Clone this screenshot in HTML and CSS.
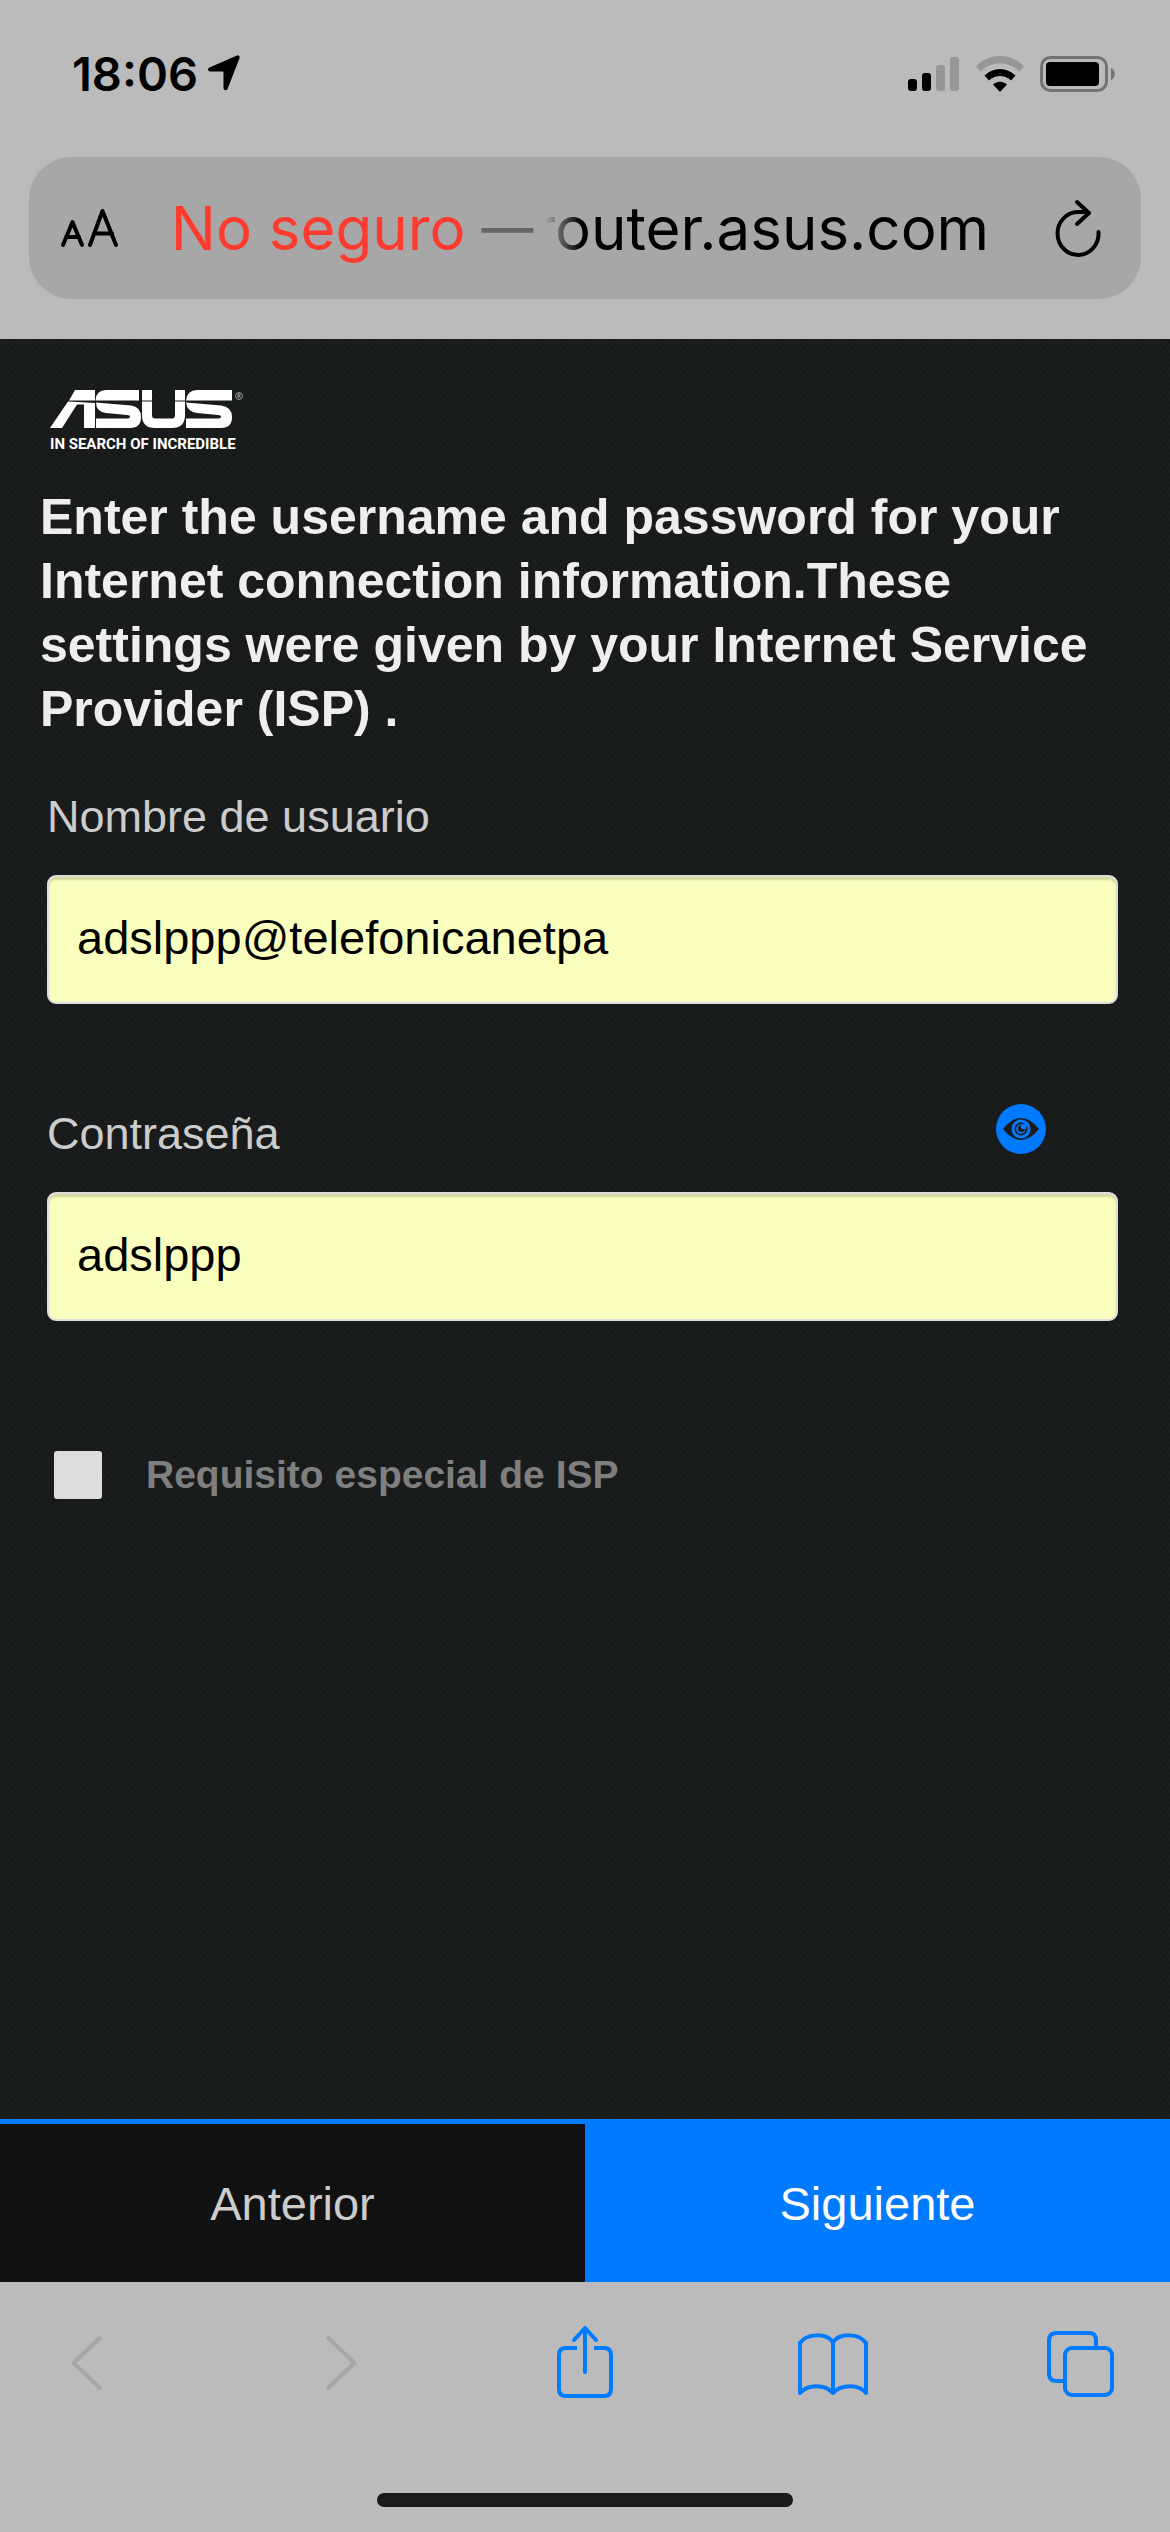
FILE: index.html
```html
<!DOCTYPE html>
<html lang="es">
<head>
<meta charset="utf-8">
<meta name="viewport" content="width=device-width, initial-scale=1">
<title>router.asus.com</title>
<link rel="stylesheet" href="styles.css">
</head>
<body>
<header class="chrome-top">
  <div class="status-bar">
    <div class="status-left">
      <span class="clock">18:06</span>
      <svg class="location" viewBox="0 0 32 36" aria-hidden="true"><path d="M30.500 .5C31.500 .9 32 2 31.500 3.300L19.500 34C18.500 36 15.500 35.500 15.500 33V17.500Q15.500 16.500 14.500 16.500H2.500C-.2 16.500-.8 13.500 1.500 12.500L29 .5Q30 .2 30.500 .5Z"/></svg>
    </div>
    <div class="status-right">
      <svg class="signal" viewBox="0 0 52 36" aria-hidden="true"><rect y="23" width="9" height="12" rx="3"/><rect x="14" y="17" width="9" height="18" rx="3"/><rect class="dim" x="28" y="9" width="9" height="26" rx="3"/><rect class="dim" x="42" y="1" width="9" height="34" rx="3"/></svg>
      <svg class="wifi" viewBox="0 0 48 36" aria-hidden="true"><path class="dim" d="M0 10.500C13-3.500 35-3.500 48 10.500L43.500 15.500C33 4.500 15 4.500 4.500 15.500Z"/><path d="M8.500 19.500C17 10.800 31 10.800 39.500 19.500L35 24.500C29 18.500 19 18.500 13 24.500Z"/><path d="M17 28.500C21 24.800 27 24.800 31 28.500L24 36Z"/></svg>
      <svg class="battery" viewBox="0 0 76 36" aria-hidden="true"><rect class="case" x="1.500" y="1.500" width="65" height="33" rx="9"/><rect x="6" y="6" width="53" height="24" rx="4"/><path class="nub" d="M71 12C76 14 76 22 71 24Z"/></svg>
    </div>
  </div>
  <div class="address-bar">
    <button class="icon-button reader" type="button" aria-label="Tamaño del texto"><svg viewBox="0 0 58 38" aria-hidden="true"><path d="M2 36L11.500 13L21 36M5 28H18M29 36L41.500 2L55 36M33 24.500H51"/></svg></button>
    <div class="address">
      <span class="insecure">No seguro</span>
      <span class="dash">—</span>
      <span class="host">router.asus.com</span>
    </div>
    <button class="icon-button reload" type="button" aria-label="Recargar"><svg viewBox="0 0 46 56" aria-hidden="true"><path d="M43.500 32A20.500 21.500 0 1 1 23 12H33M22 2L34 13L22 24"/></svg></button>
  </div>
</header>

<main class="page">
  <div class="logo">
    <svg class="wordmark" viewBox="0 0 194 40" role="img" aria-label="ASUS">
      <path d="M25 0H45V10.500H19Z M18 11.500L45 13V38H34V14.500H27L12 38H0Z M45.500 10.500Q46 0 56 0H89V10.500Z M46 12.500L81 15.500Q91 17 91 27Q91 38 80 38H46V28.500H77Q80 28.500 80 26.500Q80 25 77 25L56 23Q46 21.500 46 12.500Z M92 0H102V10.500H92Z M92 11.500H102V25Q102 28.500 105 28.500H122Q125 28.500 125 25V11.500H135V25Q135 38 122 38H105Q92 38 92 25Z M125 0H135V10.500H125Z M136 10.500Q137 0 147 0H182V10.500Z M136 12.500L171 15.500Q182 17 182 27Q182 38 171 38H136V28.500H168Q171 28.500 171 26.500Q171 25 168 25L147 23Q137 21.500 136 12.500Z"/>
      <circle class="registered" cx="189" cy="6" r="3.500"/><path d="M188 8V4H190V6H188M189 6L190.500 8" class="registered"/>
    </svg>
    <span class="tagline">IN SEARCH OF INCREDIBLE</span>
  </div>

  <h1 class="intro">Enter the username and password for your Internet connection information.These settings were given by your Internet Service Provider (ISP) .</h1>

  <form class="form" id="isp">
    <div class="field">
      <label class="label" for="user">Nombre de usuario</label>
      <input class="input" id="user" type="text" value="adslppp@telefonicanetpa">
    </div>
    <div class="field">
      <div class="label-row">
        <label class="label" for="pass">Contraseña</label>
        <button class="eye" type="button" aria-label="Mostrar contraseña"><svg viewBox="0 0 50 50" aria-hidden="true"><circle class="disc" cx="25" cy="25" r="25"/><path class="lid" d="M7 25Q25 3 43 25Q25 47 7 25Z"/><circle class="disc" cx="25" cy="25" r="9.500"/><circle class="lid" cx="25" cy="25" r="6.500"/><circle class="disc" cx="25" cy="25" r="4.800"/><circle class="lid" cx="25.500" cy="24.500" r="3.500"/><circle class="disc" cx="27.500" cy="22.500" r="2.800"/></svg></button>
      </div>
      <input class="input" id="pass" type="text" value="adslppp">
    </div>
    <label class="check"><input class="box" type="checkbox"><span>Requisito especial de ISP</span></label>
  </form>
</main>

<div class="actions">
  <button class="action prev" type="button">Anterior</button>
  <button class="action next" type="submit" form="isp">Siguiente</button>
</div>

<footer class="chrome-bottom">
  <nav class="toolbar" aria-label="Navegador">
    <button class="tool off" type="button" aria-label="Atrás"><svg viewBox="0 0 72 76"><path d="M49 14L22.500 39L49 64"/></svg></button>
    <button class="tool off" type="button" aria-label="Adelante"><svg viewBox="0 0 72 76"><path d="M28 14L54.500 39L28 64"/></svg></button>
    <button class="tool" type="button" aria-label="Compartir"><svg viewBox="0 0 72 76"><path class="butt" d="M28 24H17Q10 24 10 31V65Q10 72 17 72H55Q62 72 62 65V31Q62 24 55 24H45"/><path d="M36 48V4M25 16L36 4L47 16"/></svg></button>
    <button class="tool" type="button" aria-label="Favoritos"><svg viewBox="0 0 72 76"><path d="M2 69V19C9 9 28 9 35 18C42 9 61 9 68 19V69C61 60 43 60 35 69C27 60 10 60 2 69ZM35 18V69"/></svg></button>
    <button class="tool" type="button" aria-label="Pestañas"><svg viewBox="0 0 72 76"><rect x="18" y="24" width="47" height="47" rx="7"/><path class="butt" d="M18 57H10Q2 57 2 50V17Q2 9 9 9H42Q49 9 49 16V24"/></svg></button>
  </nav>
  <div class="home-indicator"></div>
</footer>
</body>
</html>
```
FILE: styles.css
```css
*, *::before, *::after { box-sizing: border-box; }

body {
  margin: 0;
  min-height: 100vh;
  display: flex;
  flex-direction: column;
  background: #bbb;
  color: #000;
  font-family: "Liberation Sans", Arial, Helvetica, sans-serif;
}

button { border: 0; padding: 0; background: none; font: inherit; }
svg { display: block; overflow: visible; }

/* Status and address bars */
.chrome-top { padding: 48px 29px 40px; font-family: Inter, Roboto, sans-serif; }
.status-bar {
  display: flex;
  justify-content: space-between;
  align-items: center;
  height: 52px;
  padding: 0 25px 0 43px;
}
.status-left, .status-right { display: flex; align-items: center; }
.status-left { gap: 10px; }
.status-right { gap: 16px; }
.clock { font-size: 47px; font-weight: 600; line-height: 52px; }
.location { width: 32px; height: 36px; margin-bottom: 2px; }
.signal { width: 52px; height: 36px; }
.wifi { width: 48px; height: 36px; }
.battery { width: 76px; height: 36px; }
.dim { fill: #969696; }
.case { fill: none; stroke: #737373; stroke-width: 3; }
.nub { fill: #737373; }

.address-bar {
  display: flex;
  align-items: center;
  height: 142px;
  margin-top: 57px;
  padding: 0 40px 0 32px;
  border-radius: 42px;
  background: #a7a7a7;
}
.icon-button svg { fill: none; stroke: #000; stroke-width: 4; stroke-linecap: round; stroke-linejoin: round; }
.reader svg { width: 58px; height: 38px; }
.reload svg { width: 46px; height: 56px; }
.address {
  flex: 1;
  display: flex;
  justify-content: center;
  align-items: center;
  padding-right: 14px;
  font-size: 60px;
  line-height: 76px;
  white-space: nowrap;
}
.insecure { color: #ff3b30; }
.dash { margin-left: 16px; color: #666; font-size: 52px; font-weight: 500; }
.host {
  -webkit-mask-image: linear-gradient(90deg, transparent 12px, #000 48px);
  mask-image: linear-gradient(90deg, transparent 12px, #000 48px);
}

/* Router page */
.page {
  flex: 1;
  padding: 51px 40px 0;
  background-color: #131516;
  background-image:
    radial-gradient(circle, #1b1e1e 1px, transparent 3px),
    radial-gradient(circle, #1b1e1e 1px, transparent 3px);
  background-position: 0 0, 3px 3px;
  background-size: 6px 6px;
}
.logo { width: 194px; margin-left: 10px; color: #fff; }
.wordmark { width: 194px; height: 40px; fill: #fff; }
.registered { fill: none; stroke: #999; stroke-width: 1; }
.tagline {
  display: block;
  margin-top: 4px;
  font: bold 15px/20px Roboto, "Liberation Sans", sans-serif;
  white-space: nowrap;
}
.intro {
  margin: 31px 0 0;
  color: #eee;
  font-size: 50px;
  font-weight: bold;
  line-height: 64px;
}
.form { padding: 46px 12px 0 7px; }
.field { margin-bottom: 100px; }
.label { display: block; color: #ccc; font-size: 45px; line-height: 60px; }
.label-row { display: flex; justify-content: space-between; align-items: flex-start; padding-right: 72px; }
.eye svg { width: 50px; height: 50px; }
.disc { fill: #007aff; }
.lid { fill: #181a1b; }
.input {
  display: block;
  width: 100%;
  height: 129px;
  margin-top: 28px;
  padding: 0 28px 4px;
  border: 2px solid #ddd;
  border-radius: 9px;
  background: #faffbd;
  box-shadow: inset 0 3px 2px #d5d9a1;
  color: #000;
  font: 47px "Liberation Sans", Arial, sans-serif;
}
.check {
  display: flex;
  align-items: center;
  gap: 44px;
  margin-top: 130px;
  padding-left: 7px;
  color: #7f7f7f;
  font-size: 39px;
  font-weight: bold;
  line-height: 48px;
}
.field + .field { margin-bottom: 0; }
.box { appearance: none; width: 48px; height: 48px; margin: 0; border-radius: 3px; background: #ddd; }

.actions { display: flex; border-top: 5px solid #007aff; }
.action { flex: 1; height: 158px; font-size: 47px; }
.prev { background: #111; color: #ccc; }
.next { background: #007aff; color: #fff; }

/* Browser toolbar */
.chrome-bottom { display: flex; flex-direction: column; align-items: center; padding-bottom: 25px; }
.toolbar { display: flex; justify-content: space-between; width: 100%; padding: 42px 51px 0; }
.tool svg { width: 72px; height: 76px; fill: none; stroke: #007aff; stroke-width: 4; stroke-linecap: round; stroke-linejoin: round; }
.tool .butt { stroke-linecap: butt; }
.tool.off svg { stroke: #a6a6a6; }
.home-indicator { width: 416px; height: 14px; margin-top: 93px; border-radius: 7px; background: #191919; }
```
